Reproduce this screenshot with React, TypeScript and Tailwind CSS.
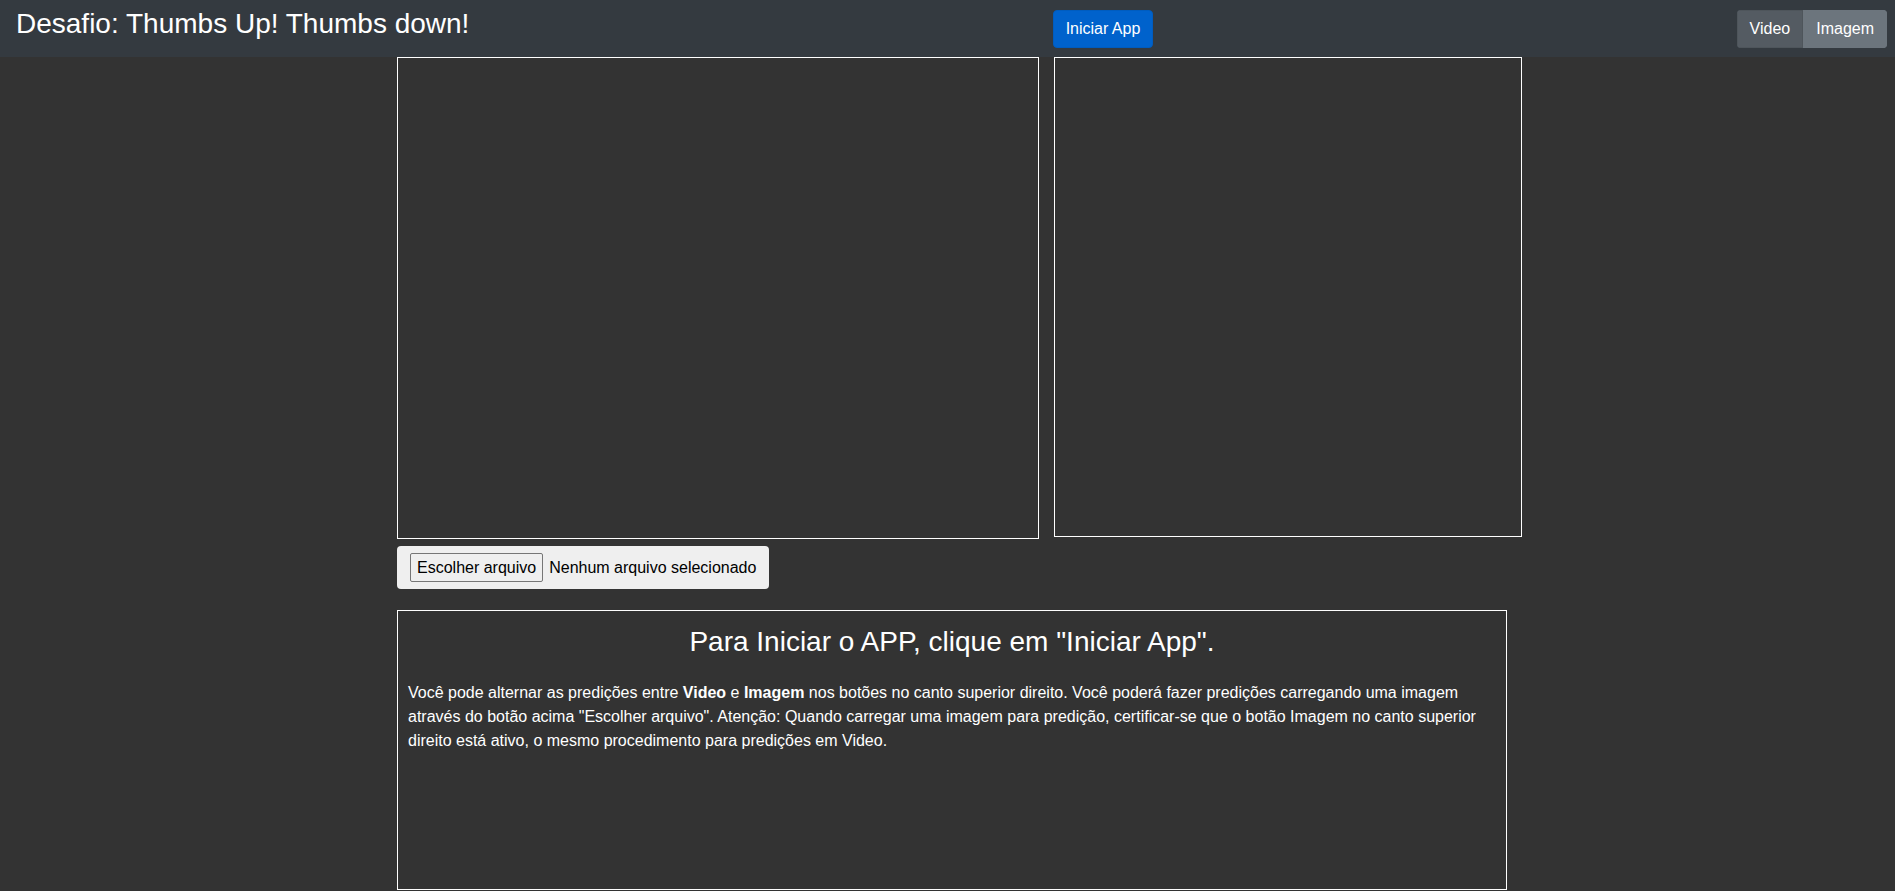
const font = { fontFamily: '"Liberation Sans", Arial, sans-serif' }

const App = () => {
  return (
    <div className="h-[891px] overflow-hidden bg-[#333333] text-white" style={font}>
      {/* Navbar */}
      <header className="flex h-[57px] items-start justify-between bg-[#343a40] pl-4 pr-2">
        <h3 className="pt-[7px] text-[28px] leading-[1.2] font-normal">Desafio: Thumbs Up! Thumbs down!</h3>
        <button className="mt-[10px] h-[38px] rounded-[4px] border border-[#005cbf] bg-[#0062cc] px-3 text-base leading-6 text-white">
          Iniciar App
        </button>
        <div className="mt-[10px] flex h-[38px] overflow-hidden rounded-[4px]">
          <button className="border border-[#4e555b] bg-[#545b62] px-3 text-base leading-6 text-white">Video</button>
          <button className="border border-[#6c757d] bg-[#6c757d] px-3 text-base leading-6 text-white">Imagem</button>
        </div>
      </header>

      <main className="ml-[397px]">
        <div className="flex items-start gap-[15px]">
          <div className="h-[482px] w-[642px] border border-white" />
          <div className="h-[480px] w-[468px] border border-white" />
        </div>

        {/* fake file input */}
        <div className="mt-[7px] flex h-[43px] w-[372px] items-center rounded-[4px] bg-[#efefef] pl-[13px] text-base text-black">
          <span className="mr-[6px] flex h-[29px] items-center rounded-[2px] border border-[#767676] bg-[#efefef] px-[6px]">
            Escolher arquivo
          </span>
          <span>Nenhum arquivo selecionado</span>
        </div>

        <div className="mt-[21px] h-[280px] w-[1110px] border border-white px-[10px] pt-[14px]">
          <h3 className="text-center text-[28px] leading-[1.2] font-normal">
            Para Iniciar o APP, clique em "Iniciar App".
          </h3>
          <p className="mt-[22px] text-base leading-6">
            Você pode alternar as predições entre <b>Video</b> e <b>Imagem</b> nos botões no canto superior direito. Você
            poderá fazer predições carregando uma imagem através do botão acima "Escolher arquivo". Atenção: Quando
            carregar uma imagem para predição, certificar-se que o botão Imagem no canto superior direito está ativo, o
            mesmo procedimento para predições em Video.
          </p>
        </div>
      </main>
    </div>
  )
}

export default App
